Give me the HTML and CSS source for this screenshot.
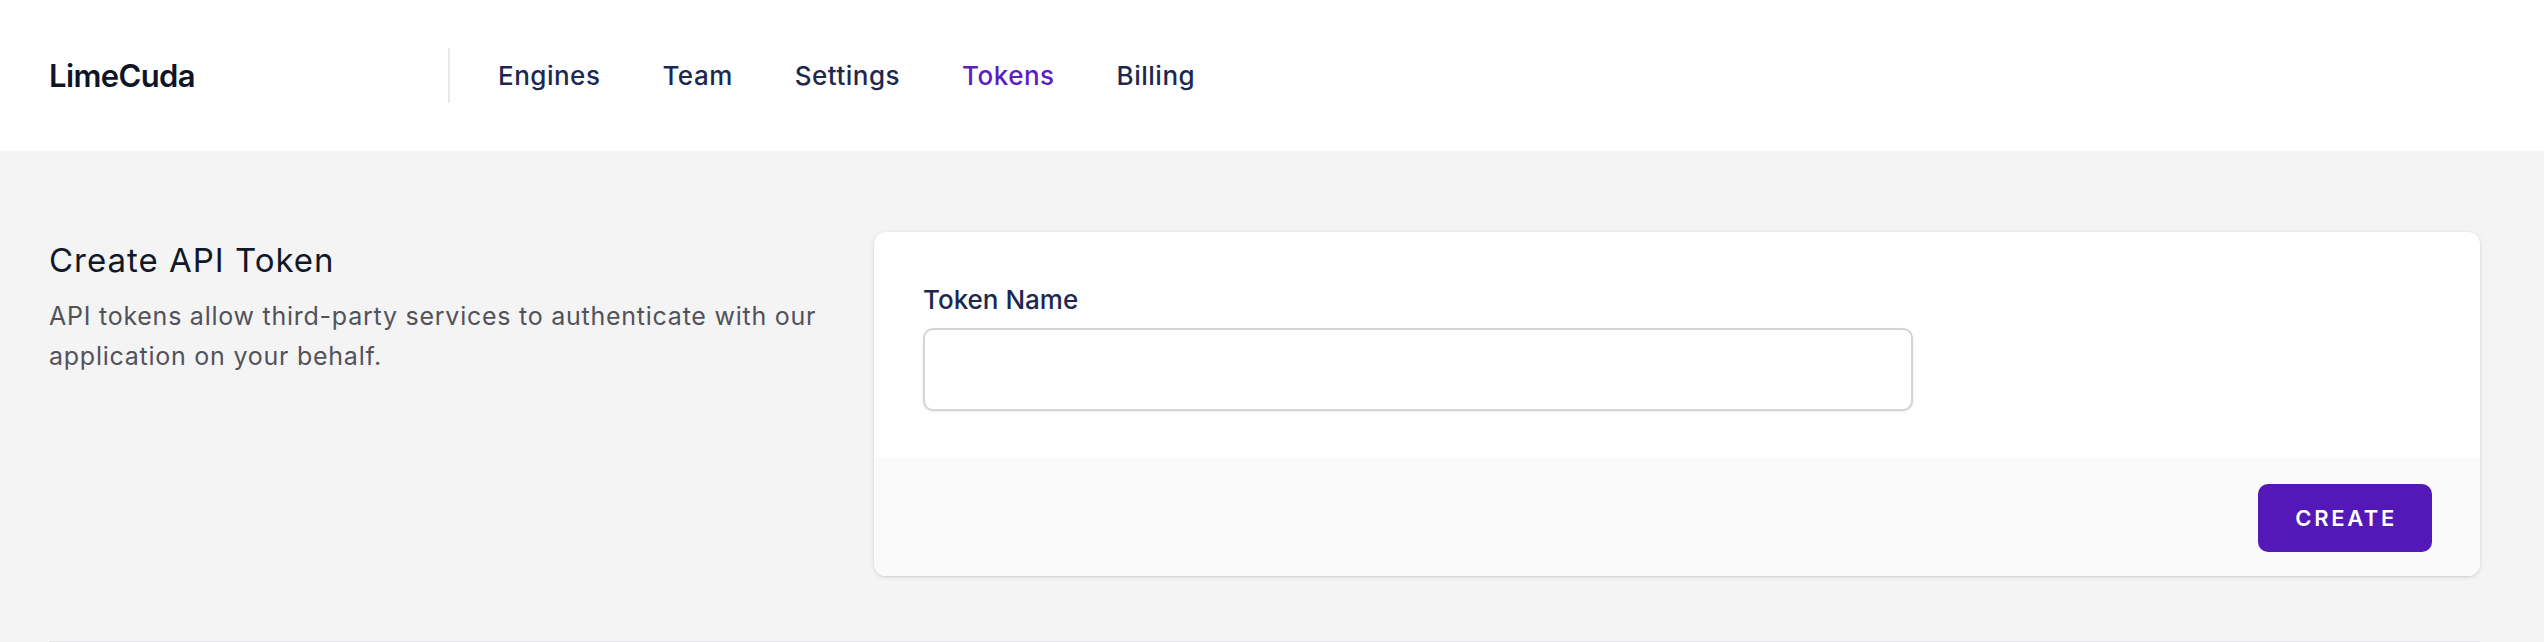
FILE: index.html
```html
<!DOCTYPE html>
<html lang="en">
<head>
<meta charset="utf-8">
<title>API Tokens - LimeCuda</title>
<link rel="stylesheet" href="styles.css">
</head>
<body>
<header class="topbar">
  <div class="brand">LimeCuda</div>
  <div class="divider"></div>
  <nav class="menu">
    <a class="menu-link" href="#">Engines</a>
    <a class="menu-link" href="#">Team</a>
    <a class="menu-link" href="#">Settings</a>
    <a class="menu-link active" href="#">Tokens</a>
    <a class="menu-link" href="#">Billing</a>
  </nav>
</header>
<main class="page">
  <section class="form-section">
    <div class="intro">
      <h2 class="intro-title">Create API Token</h2>
      <p class="intro-text">API tokens allow third-party services to authenticate with our application on your behalf.</p>
    </div>
    <form class="card">
      <div class="card-body">
        <label class="field-label" for="token-name">Token Name</label>
        <input class="field-input" id="token-name" type="text">
      </div>
      <div class="card-footer">
        <button class="btn-primary" type="button">Create</button>
      </div>
    </form>
  </section>
  <div class="section-border"></div>
</main>
</body>
</html>
```
FILE: styles.css
```css
* { box-sizing: border-box; }
html, body { margin: 0; padding: 0; }
body {
  font-family: Inter, "Noto Sans", sans-serif;
  background: #f4f4f4;
  height: 642px;
  overflow: hidden;
}
.topbar {
  height: 151px;
  background: #ffffff;
  display: flex;
  align-items: center;
  padding-left: 49px;
}
.brand {
  width: 399px;
  font-size: 31px;
  line-height: 40px;
  font-weight: 600;
  color: #0f1526;
  letter-spacing: -0.6px;
}
.divider {
  width: 2px;
  height: 55px;
  background: #e8e8ea;
}
.menu {
  display: flex;
  gap: 62px;
  margin-left: 48px;
}
.menu-link {
  font-size: 26px;
  line-height: 36px;
  font-weight: 500;
  color: #1c2850;
  text-decoration: none;
  letter-spacing: 0.5px;
}
.menu-link.active { color: #5b1ec0; }
.page {
  padding: 81px 64px 0 49px;
}
.form-section {
  display: grid;
  grid-template-columns: 781px 1fr;
  column-gap: 44px;
}
.intro { padding-top: 5px; }
.intro-title {
  margin: 0;
  font-size: 33px;
  line-height: 46px;
  font-weight: 400;
  color: #111827;
  letter-spacing: 0.03em;
}
.intro-text {
  margin: 13px 0 0;
  font-size: 25px;
  line-height: 40px;
  color: #52525b;
  letter-spacing: 0.03em;
}
.card {
  margin: 0;
  background: #ffffff;
  border-radius: 12px;
  box-shadow: 0 1px 4px rgba(0, 0, 0, 0.12), 0 1px 2px rgba(0, 0, 0, 0.06);
  overflow: hidden;
}
.card-body {
  padding: 50px 49px 47px;
  display: flex;
  flex-direction: column;
}
.field-label {
  font-size: 26px;
  line-height: 36px;
  font-weight: 500;
  color: #1c2850;
}
.field-input {
  margin-top: 10px;
  width: 990px;
  height: 83px;
  border: 2px solid #d4d4d8;
  border-radius: 10px;
  box-shadow: 0 1px 3px rgba(0, 0, 0, 0.08);
  background: #ffffff;
  font: inherit;
}
.card-footer {
  height: 118px;
  background: #fafafa;
  display: flex;
  justify-content: flex-end;
  align-items: flex-start;
  padding: 26px 48px 0 0;
}
.btn-primary {
  height: 68px;
  padding: 0 35px 0 37px;
  border: 0;
  border-radius: 10px;
  background: #5417b8;
  color: #ffffff;
  font-family: Inter, "Noto Sans", sans-serif;
  font-size: 22px;
  font-weight: 600;
  letter-spacing: 0.12em;
  text-transform: uppercase;
}
.section-border {
  margin-top: 65px;
  height: 2px;
  background: #e5e5e7;
}
```
